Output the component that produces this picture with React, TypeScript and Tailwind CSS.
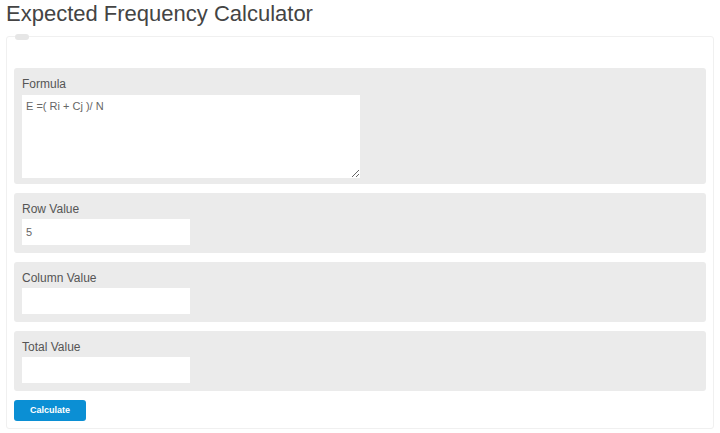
import React, { useState } from 'react';

const Field: React.FC<{ label: string; value: string; onChange: (v: string) => void }> = ({ label, value, onChange }) => (
    <div className="bg-[#ebebeb] rounded-[3px] px-2 pt-2 pb-[8px]">
        <label className="block text-[12px] leading-4 text-[#555] mb-[2px]">{label}</label>
        <input
            type="text"
            className="block w-[168px] h-[26px] bg-white px-1 text-[11px] text-[#666] outline-none"
            value={value}
            onChange={(e) => onChange(e.target.value)}
        />
    </div>
);

const App: React.FC = () => {
    const [row, setRow] = useState('5');
    const [col, setCol] = useState('');
    const [total, setTotal] = useState('');

    return (
        <div className="w-[720px] h-[433px] bg-white overflow-hidden" style={{ fontFamily: '"Liberation Sans", Arial, sans-serif' }}>
            <h1 className="text-[22px] leading-[28px] text-[#444] pl-[6px]">Expected Frequency Calculator</h1>

            <div className="relative ml-[6px] mt-[8px] w-[708px] border border-[#f0f0f0] rounded-[3px] px-[7px] pt-[31px] pb-[7px]">
                {/* empty legend */}
                <div className="absolute left-[8px] -top-[3px] w-[14px] h-[6px] rounded-full bg-[#e6e6e6]" />

                <div className="flex flex-col gap-[9px]">
                    <div className="bg-[#ebebeb] rounded-[3px] px-2 pt-2 pb-[6px]">
                        <label className="block text-[12px] leading-4 text-[#555] mb-[3px]">Formula</label>
                        <textarea
                            className="block w-[338px] h-[83px] bg-white px-1 py-1 text-[11px] leading-[14px] text-[#666] outline-none"
                            defaultValue="E =( Ri + Cj )/ N"
                        />
                    </div>
                    <Field label="Row Value" value={row} onChange={setRow} />
                    <Field label="Column Value" value={col} onChange={setCol} />
                    <Field label="Total Value" value={total} onChange={setTotal} />
                </div>

                <button className="mt-[9px] w-[72px] h-[21px] rounded-[3px] bg-[#0b8fd4] text-white text-[9px] font-bold">
                    Calculate
                </button>
            </div>
        </div>
    );
};

export default App;
